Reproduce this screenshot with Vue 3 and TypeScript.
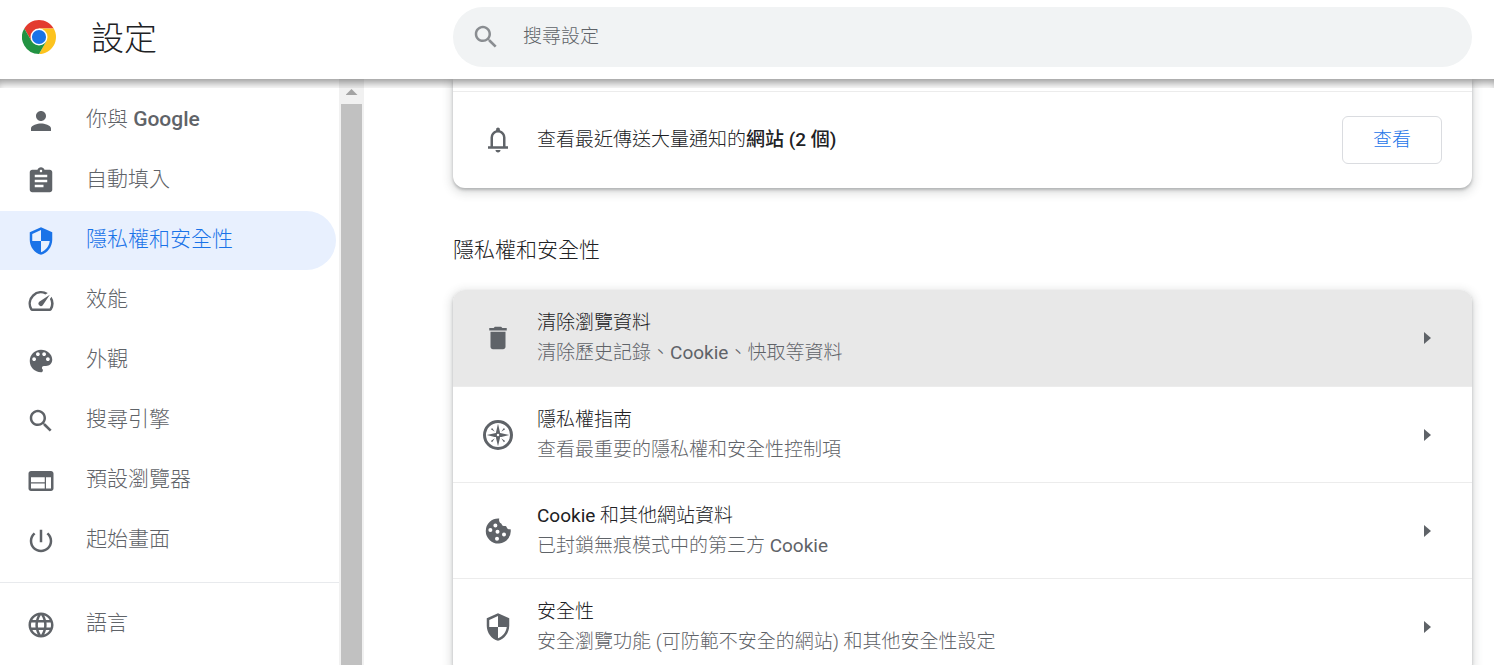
<script setup lang="ts">
interface NavItem {
  icon: string
  label: string
  latin?: string
  active?: boolean
}

interface Part {
  text: string
  latin?: boolean
}

interface SettingRow {
  icon: string
  title: Part[]
  detail: Part[]
  hovered?: boolean
}

const icons: Record<string, string> = {
  person: 'M12 12c2.21 0 4-1.79 4-4s-1.79-4-4-4-4 1.79-4 4 1.79 4 4 4zm0 2c-2.67 0-8 1.34-8 4v2h16v-2c0-2.66-5.33-4-8-4z',
  clipboard: 'M19 3h-4.18C14.4 1.84 13.3 1 12 1c-1.3 0-2.4.84-2.82 2H5c-1.1 0-2 .9-2 2v14c0 1.1.9 2 2 2h14c1.1 0 2-.9 2-2V5c0-1.1-.9-2-2-2zm-7 0c.55 0 1 .45 1 1s-.45 1-1 1-1-.45-1-1 .45-1 1-1zm2 14H7v-2h7v2zm3-4H7v-2h10v2zm0-4H7V7h10v2z',
  shield: 'M12 1L3 5v6c0 5.55 3.84 10.74 9 12 5.16-1.26 9-6.45 9-12V5l-9-4zm0 10.99h7c-.53 4.12-3.28 7.79-7 8.94V12H5V6.3l7-3.11v8.8z',
  speed: 'M20.38 8.57l-1.23 1.85a8 8 0 0 1-.22 7.58H5.07A8 8 0 0 1 15.58 6.85l1.85-1.23A10 10 0 0 0 3.35 19a2 2 0 0 0 1.72 1h13.85a2 2 0 0 0 1.74-1 10 10 0 0 0-.27-10.44zm-9.79 6.84a2 2 0 0 0 2.83 0l5.66-8.49-8.49 5.66a2 2 0 0 0 0 2.83z',
  palette: 'M12 3c-4.97 0-9 4.03-9 9s4.03 9 9 9c.83 0 1.5-.67 1.5-1.5 0-.39-.15-.74-.39-1.01-.23-.26-.38-.61-.38-.99 0-.83.67-1.5 1.5-1.5H16c2.76 0 5-2.24 5-5 0-4.42-4.03-8-9-8zm-5.500 9c-.83 0-1.500-.67-1.500-1.500S5.670 9 6.500 9 8 9.670 8 10.500 7.330 12 6.500 12zm3-4C8.670 8 8 7.330 8 6.500S8.670 5 9.500 5s1.500.67 1.500 1.500S10.330 8 9.500 8zm5 0c-.83 0-1.500-.67-1.500-1.500S13.670 5 14.500 5s1.500.67 1.500 1.500S15.330 8 14.500 8zm3 4c-.83 0-1.500-.67-1.500-1.500S16.670 9 17.500 9s1.500.67 1.500 1.500-.67 1.500-1.500 1.500z',
  search: 'M15.5 14h-.79l-.28-.27C15.41 12.590 16 11.110 16 9.500 16 5.910 13.090 3 9.500 3S3 5.910 3 9.500 5.910 16 9.500 16c1.610 0 3.090-.59 4.230-1.570l.27.28v.79l5 4.990L20.490 19l-4.990-5zm-6 0C7.010 14 5 11.990 5 9.500S7.010 5 9.500 5 14 7.010 14 9.500 11.990 14 9.500 14z',
  browser: 'M20 4H4c-1.100 0-1.990.9-1.990 2L2 18c0 1.100.9 2 2 2h16c1.100 0 2-.9 2-2V6c0-1.100-.9-2-2-2zm-5 14H4v-4h11v4zm0-5H4V9h11v4zm5 5h-4V9h4v9z',
  power: 'M13 3h-2v10h2V3zm4.830 2.170l-1.420 1.420C17.990 7.860 19 9.810 19 12c0 3.870-3.130 7-7 7s-7-3.130-7-7c0-2.190 1.010-4.140 2.580-5.420L6.170 5.170C4.230 6.820 3 9.260 3 12c0 4.970 4.030 9 9 9s9-4.030 9-9c0-2.740-1.230-5.180-3.170-6.830z',
  globe: 'M11.990 2C6.470 2 2 6.480 2 12s4.470 10 9.990 10C17.520 22 22 17.520 22 12S17.520 2 11.990 2zm6.930 6h-2.950c-.32-1.250-.78-2.450-1.380-3.560 1.840.63 3.370 1.910 4.330 3.560zM12 4.040c.83 1.200 1.480 2.530 1.910 3.960h-3.820c.43-1.430 1.080-2.760 1.910-3.960zM4.260 14C4.100 13.360 4 12.690 4 12s.1-1.360.26-2h3.380c-.08.66-.14 1.320-.14 2s.06 1.340.14 2H4.260zm.82 2h2.950c.32 1.250.78 2.450 1.380 3.560-1.840-.63-3.370-1.900-4.330-3.560zm2.950-8H5.080c.96-1.660 2.490-2.930 4.330-3.560C8.810 5.550 8.350 6.750 8.030 8zM12 19.960c-.83-1.200-1.480-2.530-1.910-3.960h3.820c-.43 1.430-1.080 2.760-1.910 3.960zM14.340 14H9.660c-.09-.66-.16-1.320-.16-2s.07-1.350.16-2h4.680c.09.65.16 1.320.16 2s-.07 1.340-.16 2zm.25 5.560c.6-1.110 1.060-2.310 1.380-3.560h2.950c-.96 1.650-2.490 2.930-4.330 3.560zM16.360 14c.08-.66.14-1.320.14-2s-.06-1.340-.14-2h3.380c.16.64.26 1.310.26 2s-.1 1.360-.26 2h-3.380z',
  bell: 'M4 19v-2h2v-7q0-2.075 1.250-3.688Q8.500 4.700 10.500 4.200v-.7q0-.625.438-1.062Q11.375 2 12 2t1.062.438Q13.500 2.875 13.500 3.500v.7q2 .5 3.250 2.112Q18 7.925 18 10v7h2v2ZM12 22q-.825 0-1.412-.587Q10 20.825 10 20h4q0 .825-.587 1.413Q12.825 22 12 22Zm-4-5h8v-7q0-1.650-1.175-2.825Q13.650 6 12 6q-1.650 0-2.825 1.175Q8 8.350 8 10Z',
  trash: 'M6 19c0 1.100.9 2 2 2h8c1.100 0 2-.9 2-2V7H6v12zM19 4h-3.500l-1-1h-5l-1 1H5v2h14V4z',
  compass: 'M12 0a12 12 0 1 0 0 24 12 12 0 0 0 0-24zm0 2.400a9.600 9.600 0 1 1 0 19.200 9.600 9.600 0 0 1 0-19.200zM12 3l-1.500 6.300-.1 1.100-1.100.1L3 12l6.300 1.500 1.100.1.1 1.100L12 21l1.500-6.300.1-1.100 1.100-.1L21 12l-6.300-1.500-1.100-.1-.1-1.100zM12 11a1 1 0 1 1 0 2 1 1 0 0 1 0-2zM6.300 7.300l1-1 2.100 3.100zM17.700 7.300l-1-1-2.100 3.100zM6.300 16.700l1 1 2.100-3.100zM17.700 16.700l-1 1-2.100-3.100z',
  cookie: 'M13 2.050A10 10 0 1 0 22.100 10.500c-1.200.3-2.500 0-2.900-1-.2-.7-.5-1.200-1.100-1.500-1.300.2-2.400.1-2.900-.8-.2-.8-.6-1.300-1.400-1.600-1-.9-1.100-2.200-.8-3.550zM9.900 5.900a1.600 1.600 0 1 1 0 3.200 1.600 1.600 0 0 1 0-3.200zM5.900 9.600a1.600 1.600 0 1 1 0 3.200 1.600 1.600 0 0 1 0-3.200zM11.600 10.900a1.600 1.600 0 1 1 0 3.200 1.600 1.600 0 0 1 0-3.200zM16.800 13.100a1.600 1.600 0 1 1 0 3.200 1.600 1.600 0 0 1 0-3.200zM11.200 16.500a1.600 1.600 0 1 1 0 3.200 1.600 1.600 0 0 1 0-3.200z',
}

const primaryNav: NavItem[] = [
  { icon: 'person', label: '你與 ', latin: 'Google' },
  { icon: 'clipboard', label: '自動填入' },
  { icon: 'shield', label: '隱私權和安全性', active: true },
  { icon: 'speed', label: '效能' },
  { icon: 'palette', label: '外觀' },
  { icon: 'search', label: '搜尋引擎' },
  { icon: 'browser', label: '預設瀏覽器' },
  { icon: 'power', label: '起始畫面' },
]

const secondaryNav: NavItem[] = [{ icon: 'globe', label: '語言' }]
const navGroups: NavItem[][] = [primaryNav, secondaryNav]

const rows: SettingRow[] = [
  {
    icon: 'trash',
    title: [{ text: '清除瀏覽資料' }],
    detail: [{ text: '清除歷史記錄、' }, { text: 'Cookie', latin: true }, { text: '、快取等資料' }],
    hovered: true,
  },
  {
    icon: 'compass',
    title: [{ text: '隱私權指南' }],
    detail: [{ text: '查看最重要的隱私權和安全性控制項' }],
  },
  {
    icon: 'cookie',
    title: [{ text: 'Cookie', latin: true }, { text: ' 和其他網站資料' }],
    detail: [{ text: '已封鎖無痕模式中的第三方 ' }, { text: 'Cookie', latin: true }],
  },
  {
    icon: 'shield',
    title: [{ text: '安全性' }],
    detail: [{ text: '安全瀏覽功能 (可防範不安全的網站) 和其他安全性設定' }],
  },
]
</script>

<template>
  <div class="settings" lang="zh-TW">
    <header class="toolbar">
      <div class="brand">
        <svg class="logo" viewBox="0 0 48 48" aria-hidden="true">
          <path fill="#e33b2e" d="M24 12h20.780A24 24 0 0 0 3.215 12L13.600 30z" />
          <path fill="#fcc31e" d="M34.390 30L24 48A24 24 0 0 0 44.780 12H24z" />
          <path fill="#229342" d="M13.610 30L3.215 12A24 24 0 0 0 24 48l10.390-18z" />
          <circle cx="24" cy="24" r="12" fill="#fff" />
          <circle cx="24" cy="24" r="10" fill="#1a73e8" />
        </svg>
        <h1>設定</h1>
      </div>
      <div class="search-area">
        <label class="search">
          <svg class="icon" viewBox="0 0 24 24" aria-hidden="true"><path :d="icons.search" /></svg>
          <input type="search" placeholder="搜尋設定" aria-label="搜尋設定" />
        </label>
      </div>
    </header>

    <div class="body">
      <aside class="sidebar">
        <nav aria-label="設定">
          <ul v-for="(group, index) in navGroups" :key="index">
            <li v-for="item in group" :key="item.icon">
              <a href="#" :class="{ active: item.active }" :aria-current="item.active ? 'page' : undefined">
                <svg class="icon" viewBox="0 0 24 24" aria-hidden="true"><path :d="icons[item.icon]" /></svg>
                <span class="label">{{ item.label }}<b v-if="item.latin">{{ item.latin }}</b></span>
              </a>
            </li>
          </ul>
        </nav>
        <div class="scrollbar" aria-hidden="true">
          <span class="arrow-up"></span>
          <span class="thumb"></span>
        </div>
      </aside>

      <main>
        <section class="card check">
          <div class="check-row">
            <svg class="icon" viewBox="0 0 24 24" aria-hidden="true"><path fill-rule="evenodd" :d="icons.bell" /></svg>
            <p>查看最近傳送大量通知的<b>網站 (2 個)</b></p>
            <button type="button" class="review">查看</button>
          </div>
        </section>

        <h2>隱私權和安全性</h2>
        <section class="card">
          <button v-for="row in rows" :key="row.icon" type="button" class="row" :class="{ hovered: row.hovered }">
            <svg class="icon" viewBox="0 0 24 24" aria-hidden="true"><path fill-rule="evenodd" :d="icons[row.icon]" /></svg>
            <span class="text">
              <span class="title"><span v-for="part in row.title" :key="part.text" :class="{ latin: part.latin }">{{ part.text }}</span></span>
              <span class="detail"><span v-for="part in row.detail" :key="part.text" :class="{ latin: part.latin }">{{ part.text }}</span></span>
            </span>
            <svg class="chevron" viewBox="0 0 7 12" aria-hidden="true"><path d="M0 0l7 6-7 6z" /></svg>
          </button>
        </section>
      </main>
    </div>
  </div>
</template>

<style>
body {
  margin: 0;
  background: #fff;
}
</style>

<style scoped>
.settings {
  display: flex;
  flex-direction: column;
  height: 100vh;
  overflow: hidden;
  color: #202124;
  font-family: Roboto, 'Noto Sans CJK TC', sans-serif;
  font-size: 19px;
  font-weight: 300;
  line-height: 30px;
}

.settings * {
  box-sizing: border-box;
}

.icon {
  flex: none;
  width: 30px;
  height: 30px;
  fill: #5f6368;
}

.latin {
  font-weight: 400;
}

b {
  font-weight: 500;
}

.toolbar {
  position: relative;
  z-index: 1;
  display: flex;
  flex: none;
  height: 79px;
  background: #fff;
}

.toolbar::after {
  content: '';
  position: absolute;
  top: 100%;
  left: 0;
  right: 0;
  height: 9px;
  box-shadow: inset 0 8px 9px -4px rgba(0, 0, 0, 0.4);
  pointer-events: none;
}

.brand {
  display: flex;
  flex: none;
  align-items: center;
  gap: 35px;
  width: 364px;
  padding: 0 0 5px 22px;
}

.logo {
  width: 34px;
  height: 34px;
}

h1 {
  margin: 0;
  padding-top: 4px;
  font-size: 33px;
  font-weight: 300;
  line-height: 40px;
}

.search-area {
  flex: 1;
  padding: 7px 22px 12px 89px;
}

.search {
  display: flex;
  align-items: center;
  gap: 22px;
  height: 60px;
  padding: 0 30px 0 18px;
  border-radius: 30px;
  background: #f1f3f4;
}

.search .icon {
  opacity: 0.7;
}

.search input {
  flex: 1;
  min-width: 0;
  padding: 0;
  border: 0;
  outline: 0;
  background: transparent;
  color: #202124;
  font: inherit;
}

.search input::placeholder {
  color: #5f6368;
  opacity: 1;
}

.body {
  display: flex;
  flex: 1;
  min-height: 0;
}

.sidebar {
  display: flex;
  flex: none;
  width: 364px;
  overflow: hidden;
}

nav {
  flex: 1;
}

ul {
  display: flex;
  flex-direction: column;
  gap: 1px;
  margin: 0;
  padding: 12px 3px 12px 0;
  list-style: none;
}

ul + ul {
  border-top: 1px solid #e8eaed;
}

nav a {
  display: flex;
  align-items: center;
  gap: 30px;
  height: 59px;
  padding-left: 26px;
  border-radius: 0 30px 30px 0;
  color: #5f6368;
  font-size: 21px;
  text-decoration: none;
}

nav a.active {
  background: #e8f0fe;
  color: #1a73e8;
}

nav a.active .icon {
  fill: #1a73e8;
}

.label {
  padding-bottom: 4px;
}

.scrollbar {
  display: flex;
  flex: none;
  flex-direction: column;
  align-items: center;
  width: 25px;
  padding: 10px 2px 0;
  background: #f1f1f1;
}

.arrow-up {
  width: 12px;
  height: 6px;
  background: #a3a3a3;
  clip-path: polygon(50% 0, 100% 100%, 0 100%);
}

.thumb {
  flex: 1;
  width: 100%;
  margin-top: 9px;
  background: #c1c1c1;
}

main {
  flex: 1;
  min-width: 0;
  overflow: hidden;
  padding: 0 22px 0 89px;
}

.card {
  overflow: hidden;
  border-radius: 12px;
  background: #fff;
  box-shadow:
    0 2px 3px rgba(60, 64, 67, 0.3),
    0 3px 9px 3px rgba(60, 64, 67, 0.15);
}

.check {
  padding-top: 12px;
  border-radius: 0 0 12px 12px;
}

.check-row {
  display: flex;
  align-items: center;
  gap: 24px;
  height: 97px;
  padding: 0 30px;
  border-top: 1px solid #ececec;
}

.check-row p {
  flex: 1;
  margin: 0;
}

.review {
  width: 100px;
  height: 48px;
  padding: 0;
  border: 1px solid #dadce0;
  border-radius: 6px;
  background: #fff;
  color: #1a73e8;
  font: inherit;
}

h2 {
  margin: 47px 0 25px;
  font-size: 21px;
  font-weight: 300;
  line-height: 30px;
}

.row {
  display: flex;
  align-items: center;
  gap: 24px;
  width: 100%;
  height: 96px;
  padding: 0 41px 0 30px;
  border: 0;
  background: #fff;
  color: inherit;
  font: inherit;
  text-align: left;
}

.row + .row {
  border-top: 1px solid #ececec;
}

.row.hovered {
  background: #e8e8e8;
}

.text {
  display: flex;
  flex: 1;
  flex-direction: column;
}

.title,
.detail {
  white-space: pre-wrap;
}

.detail {
  color: #5f6368;
}

.chevron {
  width: 7px;
  height: 12px;
  fill: #5f6368;
}
</style>
